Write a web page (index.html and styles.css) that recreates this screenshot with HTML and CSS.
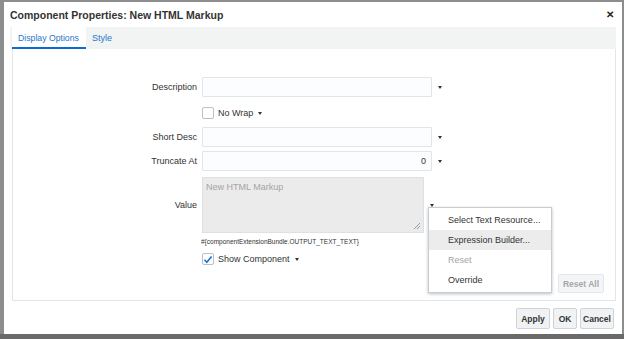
FILE: index.html
```html
<!DOCTYPE html>
<html>
<head>
	<meta charset="utf-8">
	<title>Component Properties</title>
	<link rel="stylesheet" href="styles.css">
</head>
<body>
	<div class="dialog">
		<div class="dlg-head">
			<span class="dlg-title">Component Properties: New HTML Markup</span>
			<span class="dlg-close">&#10005;</span>
		</div>
		<div class="tabs">
			<span class="tab active">Display Options</span>
			<span class="tab">Style</span>
		</div>
		<div class="panel">
			<div class="row r-desc">
				<label class="lbl">Description</label>
				<div class="inp"></div>
				<span class="arrow"></span>
			</div>
			<div class="row r-wrap">
				<span class="lbl"></span>
				<span class="chk"></span>
				<span class="chk-text">No Wrap</span>
				<span class="arrow small"></span>
			</div>
			<div class="row r-short">
				<label class="lbl">Short Desc</label>
				<div class="inp"></div>
				<span class="arrow"></span>
			</div>
			<div class="row r-trunc">
				<label class="lbl">Truncate At</label>
				<div class="inp num">0</div>
				<span class="arrow"></span>
			</div>
			<div class="row r-value">
				<label class="lbl">Value</label>
				<div class="area">
					New HTML Markup
					<svg class="grip" width="8" height="8" viewBox="0 0 8 8"><path d="M7 1L1 7M7 4L4 7" stroke="#888" stroke-width="0.8"/></svg>
				</div>
				<span class="arrow"></span>
			</div>
			<div class="row r-el">
				<span class="lbl"></span>
				<span class="el">#{componentExtensionBundle.OUTPUT_TEXT_TEXT}</span>
			</div>
			<div class="row r-show">
				<span class="lbl"></span>
				<span class="chk on"><svg width="10" height="9" viewBox="0 0 10 9"><path d="M1.5 4.8L3.8 7.2L8.6 1.5" fill="none" stroke="#1a73d0" stroke-width="1.6"/></svg></span>
				<span class="chk-text">Show Component</span>
				<span class="arrow small"></span>
			</div>
			<div class="panel-foot">
				<button class="btn disabled">Reset All</button>
			</div>

			<ul class="menu">
				<li>Select Text Resource...</li>
				<li class="hover">Expression Builder...</li>
				<li class="off">Reset</li>
				<li>Override</li>
			</ul>
		</div>
		<div class="dlg-foot">
			<button class="btn w34">Apply</button>
			<button class="btn w24">OK</button>
			<button class="btn w34">Cancel</button>
		</div>
	</div>
</body>
</html>
```

FILE: styles.css
```css
* {
	margin: 0;
	padding: 0;
	box-sizing: border-box;
}

body {
	background: #8d8d8d;
	font-family: "Liberation Sans", Arial, sans-serif;
	font-size: 9px;
	color: #333;
	border-bottom: 5px solid #6a6a6a;
	height: 339px;
	overflow: hidden;
}

.dialog {
	width: 618px;
	height: 332px;
	margin: 2px 0 0 4px;
	background: #fff;
	display: flex;
	flex-direction: column;
	padding: 0 6px 0 6px;
}

.dlg-head {
	height: 25px;
	display: flex;
	align-items: center;
	justify-content: space-between;
	padding: 0 2px 0 0;
}

.dlg-title {
	font-size: 10.5px;
	font-weight: bold;
	color: #333;
}

.dlg-close {
	font-size: 10px;
	font-weight: bold;
	color: #222;
}

.tabs {
	height: 22px;
	background: #f2f3f3;
	display: flex;
	align-items: stretch;
	padding-left: 2px;
}

.tab {
	display: flex;
	align-items: center;
	padding: 0 6px;
	color: #1f78c9;
	font-size: 9px;
	white-space: nowrap;
}

.tab.active {
	background: #fff;
	border-bottom: 2px solid #0a6dcc;
	padding: 2px 6px 0;
	width: 74px;
	font-size: 8.7px;
}

.panel {
	position: relative;
	height: 252px;
	margin-left: 2px;
	border: 1px solid #e0e6ea;
	border-top: none;
	display: flex;
	flex-direction: column;
	padding-top: 28px;
}

.row {
	display: flex;
	align-items: center;
}

.lbl {
	width: 189px;
	text-align: right;
	padding-right: 5px;
	flex-shrink: 0;
	color: #333;
}

.inp {
	width: 230px;
	height: 20px;
	border: 1px solid #dfe5e9;
	background: #fcfdfe;
	border-radius: 1px;
	font-size: 9px;
	line-height: 18px;
	padding-right: 5px;
}

.inp.num {
	text-align: right;
}

.arrow {
	width: 0;
	height: 0;
	border-left: 2.5px solid transparent;
	border-right: 2.5px solid transparent;
	border-top: 3px solid #333;
	margin-left: 6px;
}

.arrow.small {
	margin-left: 5px;
}

.r-wrap {
	margin-top: 10px;
	height: 12px;
}

.r-short {
	margin-top: 8px;
}

.r-trunc {
	margin-top: 4px;
}

.r-value {
	margin-top: 6px;
}

.r-el {
	margin-top: 3px;
	height: 10px;
}

.r-show {
	margin-top: 7px;
	height: 12px;
}

.chk {
	width: 12px;
	height: 12px;
	border: 1px solid #b5c1cb;
	border-radius: 2px;
	background: #fff;
	display: flex;
	align-items: center;
	justify-content: center;
}

.chk-text {
	margin-left: 4px;
	font-size: 9px;
}

.area {
	position: relative;
	width: 222px;
	height: 56px;
	background: #ebebeb;
	border: 1px solid #dbe1e5;
	color: #a4a4a4;
	padding: 4px 3px;
	font-size: 9px;
}

.grip {
	position: absolute;
	right: 2px;
	bottom: 2px;
}

.r-value .arrow {
	margin-left: 6px;
}

.el {
	font-size: 6.5px;
	color: #333;
	margin-left: -1px;
}

.panel-foot {
	margin-top: auto;
	display: flex;
	justify-content: flex-end;
	padding: 0 11px 7px 0;
}

.btn {
	font-family: "Liberation Sans", Arial, sans-serif;
	font-size: 8.5px;
	font-weight: bold;
	color: #333;
	background: #f1f2f3;
	border: 1px solid #cdd5db;
	border-radius: 2px;
	height: 21px;
	padding: 0 4px;
}

.btn.w34 {
	width: 34px;
	padding: 0;
}

.btn.w24 {
	width: 24px;
	padding: 0;
}

.btn.disabled {
	color: #a7a7a7;
	background: #f4f5f6;
	border-color: #e3e7ea;
	height: 19px;
	padding: 0 4px;
}

.menu {
	position: absolute;
	left: 415px;
	top: 158px;
	width: 124px;
	list-style: none;
	background: #fff;
	border: 1px solid #c6ced5;
	box-shadow: 0 1px 3px rgba(0, 0, 0, 0.25);
	padding: 2px 0;
}

.menu li {
	height: 20px;
	line-height: 20px;
	padding-left: 19px;
	font-size: 9px;
	color: #333;
}

.menu li.hover {
	background: #ececec;
}

.menu li.off {
	color: #a3a3a3;
}

.dlg-foot {
	flex: 1;
	display: flex;
	justify-content: flex-end;
	align-items: center;
	gap: 3px;
	padding: 2px 2px 0 0;
}
```
